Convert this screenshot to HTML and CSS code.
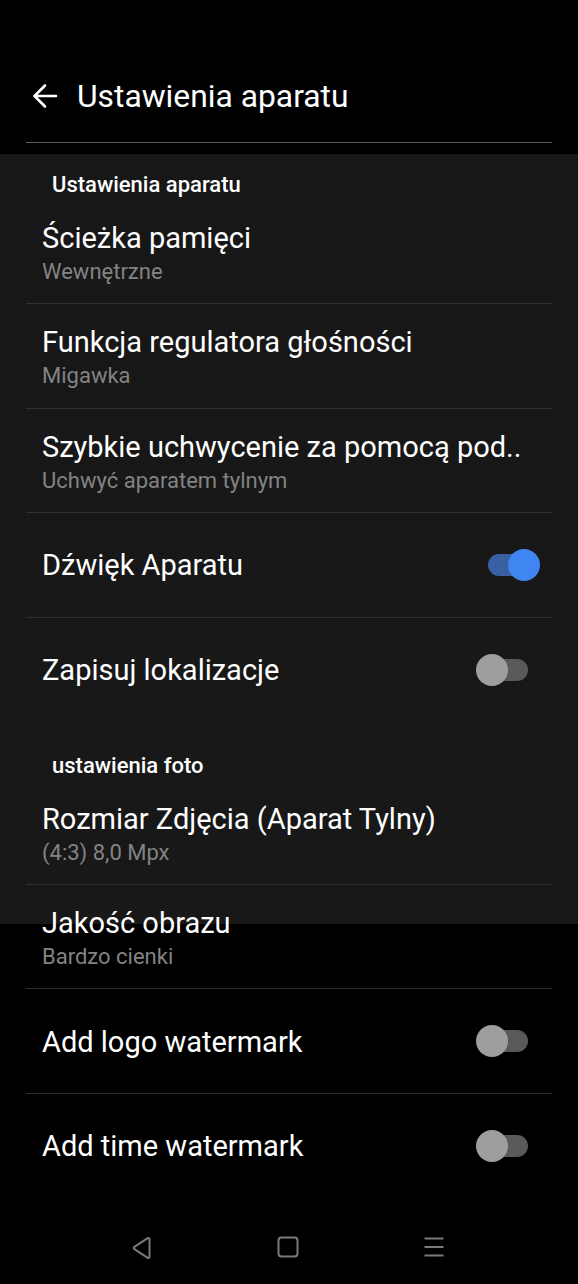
FILE: index.html
```html
<!DOCTYPE html>
<html lang="pl">
<head>
<meta charset="utf-8">
<title>Ustawienia aparatu</title>
<link rel="stylesheet" href="styles.css">
</head>
<body>
<div class="screen">
  <header class="appbar">
    <div class="appbar-row">
      <svg class="back" width="26" height="26" viewBox="0 0 26 26" aria-hidden="true">
        <path d="M24 13H2.5M13 2.5L2.5 13L13 23.5" fill="none" stroke="#fff" stroke-width="2.6" stroke-linecap="round" stroke-linejoin="round"/>
      </svg>
      <h1 class="appbar-title">Ustawienia aparatu</h1>
    </div>
    <div class="appbar-divider"></div>
  </header>

  <main class="scroll">
    <div class="panel">
      <div class="section-title">Ustawienia aparatu</div>
      <div class="row two">
        <div class="texts"><div class="title">Ścieżka pamięci</div><div class="sub">Wewnętrzne</div></div>
      </div>
      <div class="row two">
        <div class="texts"><div class="title">Funkcja regulatora głośności</div><div class="sub">Migawka</div></div>
      </div>
      <div class="row two">
        <div class="texts"><div class="title">Szybkie uchwycenie za pomocą pod..</div><div class="sub">Uchwyć aparatem tylnym</div></div>
      </div>
      <div class="row one">
        <div class="texts"><div class="title">Dźwięk Aparatu</div></div>
        <div class="switch on"><span class="track"></span><span class="knob"></span></div>
      </div>
      <div class="row one last">
        <div class="texts"><div class="title">Zapisuj lokalizacje</div></div>
        <div class="switch"><span class="track"></span><span class="knob"></span></div>
      </div>
      <div class="section-title">ustawienia foto</div>
      <div class="row two">
        <div class="texts"><div class="title">Rozmiar Zdjęcia (Aparat Tylny)</div><div class="sub">(4:3) 8,0 Mpx</div></div>
      </div>
      <div class="row two">
        <div class="texts"><div class="title">Jakość obrazu</div><div class="sub">Bardzo cienki</div></div>
      </div>
      <div class="row one">
        <div class="texts"><div class="title">Add logo watermark</div></div>
        <div class="switch"><span class="track"></span><span class="knob"></span></div>
      </div>
      <div class="row one last">
        <div class="texts"><div class="title">Add time watermark</div></div>
        <div class="switch"><span class="track"></span><span class="knob"></span></div>
      </div>
    </div>
  </main>

  <nav class="navbar">
    <svg width="22" height="24" viewBox="0 0 22 24" aria-hidden="true">
      <path d="M18.5 3.2v17.6c0 1-1 1.5-1.8 1L3.4 13.1c-.8-.5-.8-1.7 0-2.2L16.7 2.2c.8-.5 1.8 0 1.8 1z" fill="none" stroke="#7a7a7a" stroke-width="2" stroke-linejoin="round"/>
    </svg>
    <svg width="22" height="22" viewBox="0 0 22 22" aria-hidden="true">
      <rect x="1.5" y="1.5" width="19" height="19" rx="3" fill="none" stroke="#7a7a7a" stroke-width="2"/>
    </svg>
    <svg width="22" height="22" viewBox="0 0 22 22" aria-hidden="true">
      <path d="M1.5 2.5h19M1.5 11h19M1.5 19.5h19" stroke="#7a7a7a" stroke-width="2"/>
    </svg>
  </nav>
</div>
</body>
</html>
```

FILE: styles.css
```css
* { box-sizing: border-box; }
html, body {
  margin: 0;
  padding: 0;
  background: #000;
}
body {
  font-family: Roboto, "Noto Sans", "Liberation Sans", sans-serif;
  color: #fff;
}
.screen {
  width: 578px;
  height: 1284px;
  display: flex;
  flex-direction: column;
  overflow: hidden;
  background: #000;
}
.appbar {
  padding-top: 66px;
}
.appbar-row {
  height: 60px;
  display: flex;
  align-items: center;
  padding-left: 32px;
}
.back {
  flex: none;
  display: block;
}
.appbar-title {
  margin: 0 0 0 19px;
  font-size: 31.8px;
  font-weight: 400;
  line-height: 40px;
  color: #fff;
}
.appbar-divider {
  margin: 16px 26px 0;
  height: 1px;
  background: #5c5c5c;
}
.scroll {
  height: 1019px;
  overflow: hidden;
  flex: none;
}
.panel {
  background: linear-gradient(to bottom, #000 0, #000 11px, #171717 11px, #181818 781px, #000 781px);
}
.section-title {
  padding: 30px 0 0 52px;
  height: 57px;
  font-size: 22px;
  font-weight: 500;
  line-height: 24px;
  color: #fff;
}
.row.last + .section-title {
  height: 59px;
  padding-top: 32px;
}
.row {
  margin: 0 26px;
  padding: 0 0 0 16px;
  display: flex;
  align-items: center;
  border-bottom: 1px solid #2f2f2f;
  height: 104.4px;
}
.row.last { border-bottom: none; height: 104px; }
.row.two {
  align-items: flex-start;
  padding-top: 21px;
}
.texts {
  flex: 1;
  min-width: 0;
}
.title {
  font-size: 29px;
  line-height: 34px;
  color: #fff;
  white-space: nowrap;
}
.row.one .title { line-height: 30px; padding-top: 1px; }
.sub {
  margin-top: 2px;
  font-size: 22px;
  line-height: 30px;
  color: #838383;
  white-space: nowrap;
}
.switch {
  position: relative;
  flex: none;
  width: 64px;
  height: 32px;
  margin-right: 12px;
}
.switch .track {
  position: absolute;
  left: 12px;
  top: 5px;
  width: 40px;
  height: 22px;
  border-radius: 11px;
  background: #595959;
}
.switch .knob {
  position: absolute;
  left: 0;
  top: 0;
  width: 32px;
  height: 32px;
  border-radius: 50%;
  background: #9e9e9e;
}
.switch.on .track { background: #3960a3; }
.switch.on .knob {
  left: 32px;
  background: #3f86f2;
}
.navbar {
  flex: 1;
  display: flex;
  align-items: flex-start;
  padding: 74px 0 0 131px;
  gap: 124px;
}
.navbar svg { display: block; }
```
